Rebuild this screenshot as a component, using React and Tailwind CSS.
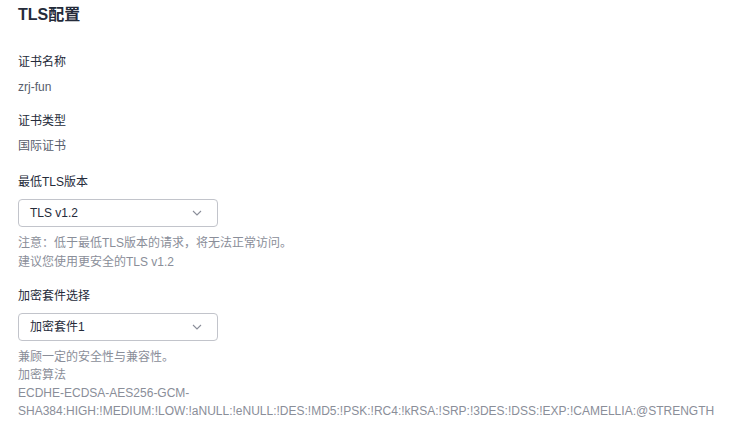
import React from "react";

const font = { fontFamily: '"Liberation Sans", Arial, "Noto Sans CJK SC", sans-serif' };

function Chevron() {
  return (
    <svg width="10" height="6" viewBox="0 0 10 6" fill="none">
      <path d="M1 1l4 4 4-4" stroke="#8a8e99" strokeWidth="1.1" />
    </svg>
  );
}

function Select({ value }) {
  return (
    <div className="flex items-center justify-between w-[200px] h-[28px] border border-[#c2c4cb] rounded-[4px] px-[11px] bg-white">
      <span className="text-[12px] text-[#252b3a]">{value}</span>
      <span className="mr-[4px] flex items-center">
        <Chevron />
      </span>
    </div>
  );
}

export default function App() {
  return (
    <div
      className="w-[740px] h-[427px] bg-white pl-[18px] pt-[3px] overflow-hidden"
      style={font}
    >
      <h1 className="text-[16px] leading-[24px] font-bold text-[#252b3a]">TLS配置</h1>

      <div className="mt-[26px] text-[12px] leading-[18px] text-[#252b3a]">证书名称</div>
      <div className="mt-[7px] text-[12px] leading-[18px] text-[#575d6c]">zrj-fun</div>

      <div className="mt-[16px] text-[12px] leading-[18px] text-[#252b3a]">证书类型</div>
      <div className="mt-[7px] text-[12px] leading-[18px] text-[#575d6c]">国际证书</div>

      <div className="mt-[18px] text-[12px] leading-[18px] text-[#252b3a]">最低TLS版本</div>
      <div className="mt-[8px]">
        <Select value="TLS v1.2" />
      </div>
      <div className="mt-[7px] text-[12px] leading-[19px] text-[#8a8e99]">
        <p>注意：低于最低TLS版本的请求，将无法正常访问。</p>
        <p>建议您使用更安全的TLS v1.2</p>
      </div>

      <div className="mt-[15px] text-[12px] leading-[18px] text-[#252b3a]">加密套件选择</div>
      <div className="mt-[8px]">
        <Select value="加密套件1" />
      </div>
      <div className="mt-[7px] text-[12px] leading-[18px] text-[#8a8e99]">
        <p>兼顾一定的安全性与兼容性。</p>
        <p>加密算法</p>
        <p>
          ECDHE-ECDSA-AES256-GCM-
          <br />
          SHA384:HIGH:!MEDIUM:!LOW:!aNULL:!eNULL:!DES:!MD5:!PSK:!RC4:!kRSA:!SRP:!3DES:!DSS:!EXP:!CAMELLIA:@STRENGTH
        </p>
      </div>
    </div>
  );
}
